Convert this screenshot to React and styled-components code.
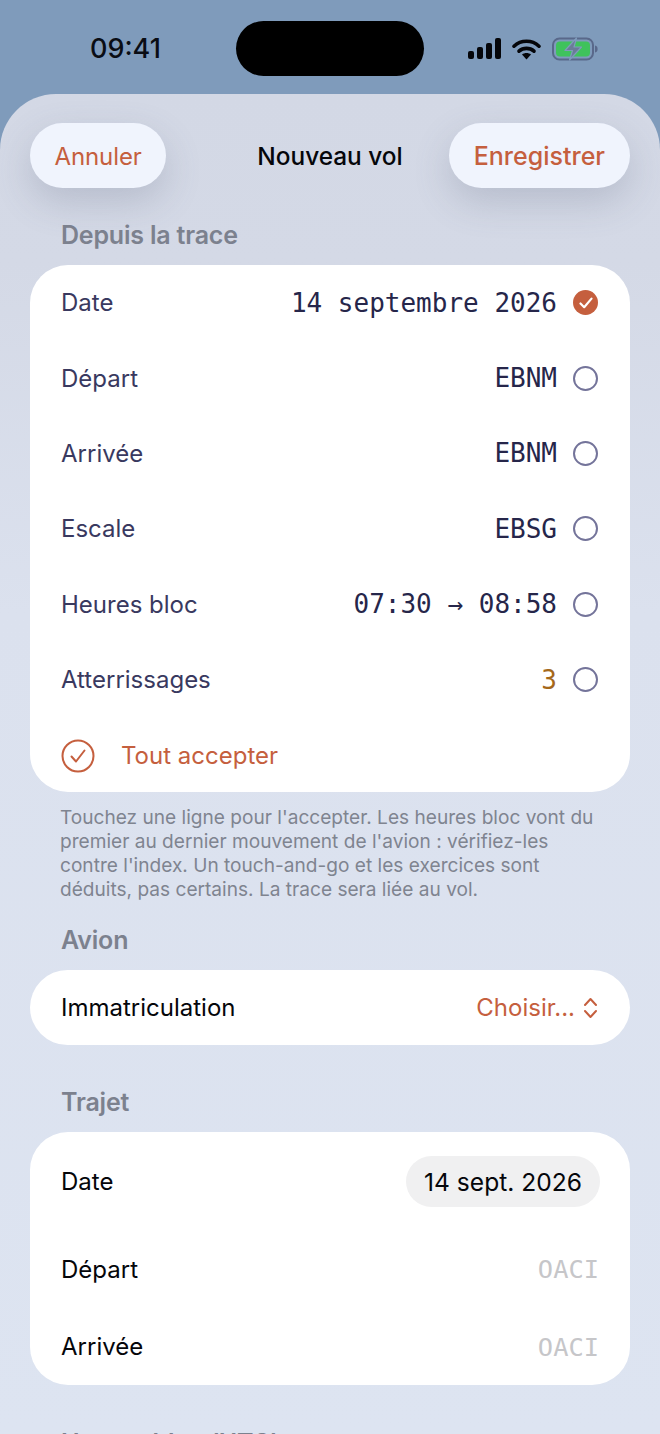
import React from 'react';
import styled, { createGlobalStyle } from 'styled-components';

const ACCENT = '#c55f3e';
const INK = '#39395f';
const MONO = '"DejaVu Sans Mono", "Liberation Mono", monospace';

const Global = createGlobalStyle`
    html, body {
        margin: 0;
        padding: 0;
        height: 1434px;
        overflow: hidden;
        background: #7f9bbb;
    }
    * { box-sizing: border-box; }
`;

const Screen = styled.div`
    width: 660px;
    height: 1434px;
    overflow: hidden;
    background: #7f9bbb;
    font-family: Inter, "Noto Sans", sans-serif;
`;

const StatusBar = styled.div`
    height: 94px;
    padding: 21px 62px 0 90px;
    display: flex;
    align-items: flex-start;
`;

const Clock = styled.div`
    width: 146px;
    height: 55px;
    line-height: 56px;
    font-size: 27px;
    font-weight: 500;
    color: #0a0d14;
`;

const Island = styled.div`
    width: 188px;
    height: 55px;
    border-radius: 28px;
    background: #000;
`;

const StatusIcons = styled.div`
    height: 55px;
    margin-left: 44px;
    display: flex;
    align-items: center;
    gap: 11px;
`;

const Sheet = styled.div`
    height: 1340px;
    border-radius: 56px 56px 0 0;
    background: linear-gradient(180deg, #d3d8e5 0, #d4d9e6 170px, #dbe1ee 520px, #dde4f1 100%);
    padding: 29px 30px 0;
`;

const Header = styled.div`
    display: grid;
    grid-template-columns: 1fr auto 1fr;
    align-items: center;
    height: 65px;
`;

const NavButton = styled.div`
    justify-self: ${p => p.$end ? 'end' : 'start'};
    height: 65px;
    padding: 0 ${p => p.$bold ? 25 : 24.5}px;
    border-radius: 33px;
    background: #f0f4fd;
    color: ${ACCENT};
    font-size: ${p => p.$bold ? 25 : 24}px;
    font-weight: ${p => p.$bold ? 500 : 400};
    line-height: 67px;
    letter-spacing: ${p => p.$bold ? 0 : -0.1}px;
    box-shadow: 0 14px 36px rgba(90, 100, 125, 0.24);
`;

const Title = styled.div`
    font-size: 24.4px;
    font-weight: 500;
    color: #05060a;
`;

const SectionLabel = styled.div`
    padding-left: 31px;
    margin-top: ${p => p.$top}px;
    height: 30px;
    line-height: 30px;
    font-size: 25px;
    font-weight: 600;
    color: #7c818e;
    letter-spacing: -0.2px;
    white-space: nowrap;
`;

const Card = styled.div`
    margin-top: 15px;
    background: #fff;
    border-radius: 38px;
`;

const Row = styled.div`
    height: ${p => p.$h || 75.4}px;
    display: flex;
    align-items: center;
    justify-content: space-between;
    padding: 0 32px 0 31px;
`;

const RowLabel = styled.div`
    font-size: 24px;
    color: ${p => p.$dark ? '#05060a' : INK};
`;

const RowRight = styled.div`
    display: flex;
    align-items: center;
    gap: 16px;
`;

const MonoValue = styled.div`
    font-family: ${MONO};
    font-size: 26px;
    color: ${p => p.$color || '#26264a'};
`;

const AcceptRow = styled.div`
    height: 75px;
    padding: 2px 0 0 31px;
    display: flex;
    align-items: center;
    gap: 26px;
    color: ${ACCENT};
    font-size: 24px;
`;

const Footnote = styled.div`
    padding: 13px 30px 0;
    height: 109px;
    font-size: 19.1px;
    line-height: 24px;
    color: #7f8490;
    white-space: nowrap;
`;

const Chevrons = styled.svg`
    margin-left: 8px;
    display: block;
`;

const Choice = styled.div`
    display: flex;
    align-items: center;
    color: ${ACCENT};
    font-size: 24px;
`;

const DatePill = styled.div`
    height: 51px;
    line-height: 52px;
    padding: 0 18px;
    border-radius: 26px;
    background: #f0f0f1;
    color: #05060a;
    font-size: 24.6px;
    margin-right: -2px;
`;

const Placeholder = styled.div`
    font-family: ${MONO};
    font-size: 25.4px;
    color: #c6c6c9;
    margin-right: -1px;
`;

const Radio = styled.span`
    width: 25px;
    height: 25px;
    border-radius: 50%;
    border: 2.2px solid #74749a;
    display: block;
`;

const Checked = styled.span`
    width: 25px;
    height: 25px;
    border-radius: 50%;
    background: ${ACCENT};
    display: flex;
    align-items: center;
    justify-content: center;
`;

const Signal = () => (
    <svg width="33" height="21" viewBox="0 0 33 21">
        <rect x="0" y="13" width="6" height="8" rx="2" fill="#05060a" />
        <rect x="9" y="9" width="6" height="12" rx="2" fill="#05060a" />
        <rect x="18" y="5" width="6" height="16" rx="2" fill="#05060a" />
        <rect x="27" y="0" width="6" height="21" rx="2" fill="#05060a" />
    </svg>
);

const Wifi = () => (
    <svg width="29" height="22" viewBox="0 0 29 22" fill="none">
        <path d="M2 8.2C9 1.6 20 1.6 27 8.2" stroke="#05060a" strokeWidth="3.6" strokeLinecap="round" />
        <path d="M7 13.2C11.2 9.4 17.8 9.4 22 13.2" stroke="#05060a" strokeWidth="3.6" strokeLinecap="round" />
        <path d="M10 16.6 14.5 21.6 19 16.6C16.5 14.6 12.5 14.6 10 16.6Z" fill="#05060a" />
    </svg>
);

const Battery = () => (
    <svg width="46" height="24" viewBox="0 0 46 24" fill="none">
        <rect x="1" y="1.5" width="40" height="21" rx="6.5" stroke="#59688a" strokeWidth="2" />
        <rect x="4" y="4.5" width="34" height="15" rx="4" fill="#3fc25c" />
        <path d="M43 8.5C45 9 45.6 10.4 45.6 12C45.6 13.6 45 15 43 15.5Z" fill="#59688a" />
        <path d="M24.5 1 13 13.5H20.5L17.5 23 29.5 10H22Z" fill="#6b7b98" stroke="#7f9bbb" strokeWidth="1.2" strokeLinejoin="round" />
    </svg>
);

const CheckMark = () => (
    <svg width="14" height="12" viewBox="0 0 14 12" fill="none">
        <path d="M1.5 6.5 5.2 10.2 12.5 1.6" stroke="#fff" strokeWidth="2.2" strokeLinecap="round" strokeLinejoin="round" />
    </svg>
);

const AcceptIcon = () => (
    <svg width="34" height="34" viewBox="0 0 34 34" fill="none">
        <circle cx="17" cy="17" r="15.5" stroke={ACCENT} strokeWidth="2" />
        <path d="M10.5 17.5 15 22.5 23.5 11.5" stroke={ACCENT} strokeWidth="2" strokeLinecap="round" strokeLinejoin="round" />
    </svg>
);

const traceRows = [
    { label: 'Date', value: '14 septembre 2026', done: true },
    { label: 'Départ', value: 'EBNM' },
    { label: 'Arrivée', value: 'EBNM' },
    { label: 'Escale', value: 'EBSG' },
    { label: 'Heures bloc', value: '07:30 → 08:58' },
    { label: 'Atterrissages', value: '3', color: '#a5681a' },
];

const App = () => {
    return (
        <Screen>
            <Global />
            <StatusBar>
                <Clock>09:41</Clock>
                <Island />
                <StatusIcons>
                    <Signal />
                    <Wifi />
                    <Battery />
                </StatusIcons>
            </StatusBar>
            <Sheet>
                <Header>
                    <NavButton>Annuler</NavButton>
                    <Title>Nouveau vol</Title>
                    <NavButton $end $bold>Enregistrer</NavButton>
                </Header>
                <SectionLabel $top={32}>Depuis la trace</SectionLabel>
                <Card>
                    {traceRows.map((row, i) => (
                        <Row key={i}>
                            <RowLabel>{row.label}</RowLabel>
                            <RowRight>
                                <MonoValue $color={row.color}>{row.value}</MonoValue>
                                {row.done ? <Checked><CheckMark /></Checked> : <Radio />}
                            </RowRight>
                        </Row>
                    ))}
                    <AcceptRow>
                        <AcceptIcon />
                        Tout accepter
                    </AcceptRow>
                </Card>
                <Footnote>
                    Touchez une ligne pour l'accepter. Les heures bloc vont du<br />
                    premier au dernier mouvement de l'avion : vérifiez-les<br />
                    contre l'index. Un touch-and-go et les exercices sont<br />
                    déduits, pas certains. La trace sera liée au vol.
                </Footnote>
                <SectionLabel $top={24}>Avion</SectionLabel>
                <Card>
                    <Row $h={75}>
                        <RowLabel $dark>Immatriculation</RowLabel>
                        <Choice>
                            Choisir...
                            <Chevrons width="15" height="22" viewBox="0 0 15 22" fill="none">
                                <path d="M2 8 7.5 2 13 8M2 14 7.5 20 13 14" stroke={ACCENT} strokeWidth="2" strokeLinecap="round" strokeLinejoin="round" />
                            </Chevrons>
                        </Choice>
                    </Row>
                </Card>
                <SectionLabel $top={42}>Trajet</SectionLabel>
                <Card>
                    <Row $h={98}>
                        <RowLabel $dark>Date</RowLabel>
                        <DatePill>14 sept. 2026</DatePill>
                    </Row>
                    <Row $h={78}>
                        <RowLabel $dark>Départ</RowLabel>
                        <Placeholder>OACI</Placeholder>
                    </Row>
                    <Row $h={77}>
                        <RowLabel $dark>Arrivée</RowLabel>
                        <Placeholder>OACI</Placeholder>
                    </Row>
                </Card>
                <SectionLabel $top={43}>Heures bloc (UTC)</SectionLabel>
            </Sheet>
        </Screen>
    );
};

export default App;
